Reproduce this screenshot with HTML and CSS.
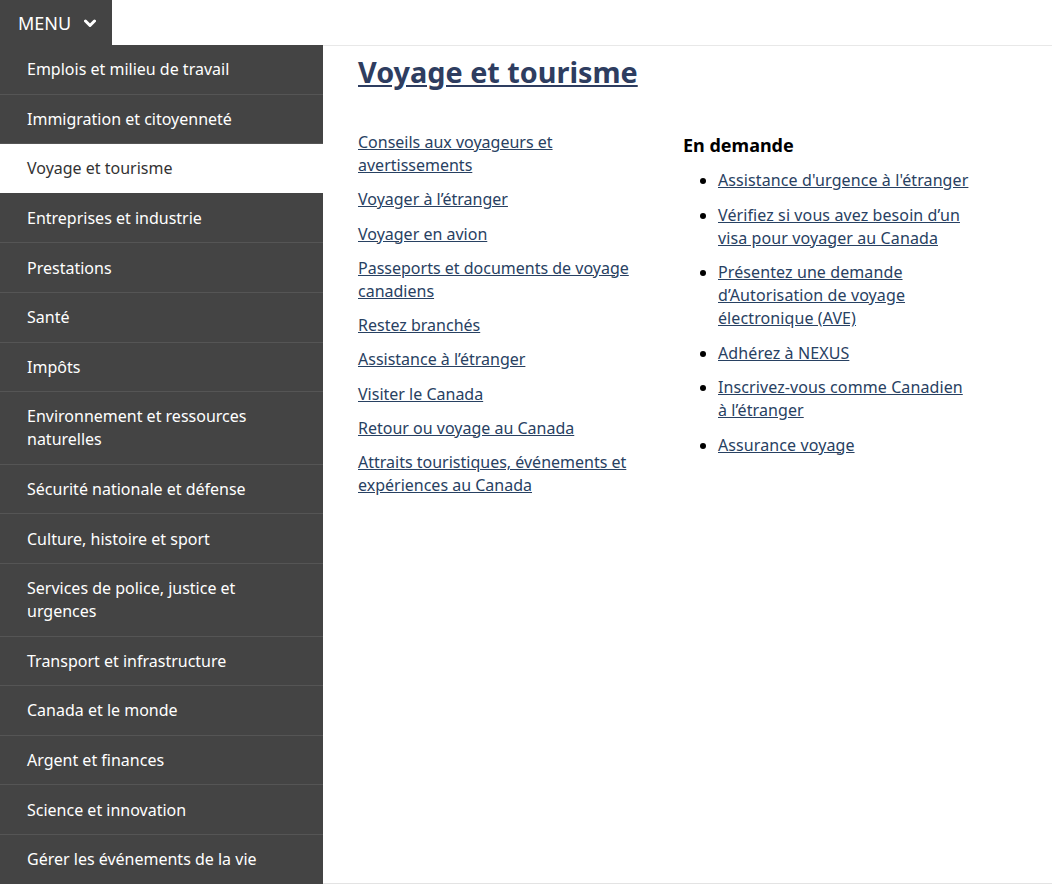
FILE: index.html
```html
<!DOCTYPE html>
<html lang="fr">
<head>
<meta charset="utf-8">
<title>Voyage et tourisme</title>
<link rel="stylesheet" href="styles.css">
</head>
<body>
<header class="topbar">
  <button class="menu-btn" type="button">MENU
    <svg class="chev" width="12" height="9" viewBox="0 0 12 9" aria-hidden="true"><polyline points="1.5,2 6,6.5 10.5,2" fill="none" stroke="#fff" stroke-width="3" stroke-linecap="round" stroke-linejoin="round"/></svg>
  </button>
</header>
<div class="mega">
  <nav class="menu">
    <ul class="menu-list">
      <li><a href="#">Emplois et milieu de travail</a></li>
      <li><a href="#">Immigration et citoyenneté</a></li>
      <li class="active"><a href="#">Voyage et tourisme</a></li>
      <li><a href="#">Entreprises et industrie</a></li>
      <li><a href="#">Prestations</a></li>
      <li><a href="#">Santé</a></li>
      <li><a href="#">Impôts</a></li>
      <li><a href="#">Environnement et ressources naturelles</a></li>
      <li><a href="#">Sécurité nationale et défense</a></li>
      <li><a href="#">Culture, histoire et sport</a></li>
      <li><a href="#">Services de police, justice et urgences</a></li>
      <li><a href="#">Transport et infrastructure</a></li>
      <li><a href="#">Canada et le monde</a></li>
      <li><a href="#">Argent et finances</a></li>
      <li><a href="#">Science et innovation</a></li>
      <li><a href="#">Gérer les événements de la vie</a></li>
    </ul>
  </nav>
  <section class="panel">
    <h1 class="panel-title"><a href="#">Voyage et tourisme</a></h1>
    <div class="cols">
      <ul class="sub-links">
        <li><a href="#">Conseils aux voyageurs et avertissements</a></li>
        <li><a href="#">Voyager à l’étranger</a></li>
        <li><a href="#">Voyager en avion</a></li>
        <li><a href="#">Passeports et documents de voyage canadiens</a></li>
        <li><a href="#">Restez branchés</a></li>
        <li><a href="#">Assistance à l’étranger</a></li>
        <li><a href="#">Visiter le Canada</a></li>
        <li><a href="#">Retour ou voyage au Canada</a></li>
        <li><a href="#">Attraits touristiques, événements et expériences au Canada</a></li>
      </ul>
      <div class="demand">
        <h2 class="demand-title">En demande</h2>
        <ul class="demand-list">
          <li><a href="#">Assistance d'urgence à l'étranger</a></li>
          <li><a href="#">Vérifiez si vous avez besoin d’un visa pour voyager au Canada</a></li>
          <li><a href="#">Présentez une demande d’Autorisation de voyage électronique (AVE)</a></li>
          <li><a href="#">Adhérez à NEXUS</a></li>
          <li><a href="#">Inscrivez-vous comme Canadien à l’étranger</a></li>
          <li><a href="#">Assurance voyage</a></li>
        </ul>
      </div>
    </div>
  </section>
</div>
</body>
</html>
```

FILE: styles.css
```css
* { box-sizing: border-box; }
html, body { margin: 0; padding: 0; }
body {
  font-family: "Noto Sans", "DejaVu Sans", sans-serif;
  font-size: 16px;
  line-height: 23px;
  color: #333;
  background: #fff;
  width: 1052px;
  height: 884px;
  overflow: hidden;
}
ul { list-style: none; margin: 0; padding: 0; }

.topbar { height: 45px; display: flex; }
.menu-btn {
  height: 45px;
  width: 112px;
  background: #444;
  color: #fff;
  border: 0;
  margin: 0;
  padding: 0 0 0 18px;
  font-family: inherit;
  font-size: 18px;
  display: flex;
  align-items: center;
  gap: 13px;
  cursor: pointer;
}
.chev { display: block; margin-top: 1px; }

.mega { display: flex; height: 839px; }
.menu { width: 323px; flex: none; background: #444; }
.menu-list li { border-bottom: 1px solid #555; }
.menu-list li:last-child { border-bottom: 0; }
.menu-list a {
  display: block;
  padding: 13.3px 20px 12.3px 27px;
  color: #fff;
  text-decoration: none;
}
.menu-list li.active { background: #fff; border-bottom-color: #444; }
.menu-list li.active a { color: #333; }

.panel {
  flex: 1;
  border-top: 1px solid #e8e8e8;
  border-bottom: 1px solid #e3e3e3;
  padding: 6px 35px 0 35px;
}
.panel-title {
  margin: 0 0 39px;
  font-size: 28.8px;
  line-height: 40px;
  font-weight: 700;
}
.panel-title a { color: #2e3d60; }

.cols {
  display: grid;
  grid-template-columns: 295px 295px;
  column-gap: 30px;
}
a { color: #284162; }
.sub-links li { margin-bottom: 11px; line-height: 23.2px; }

.demand-title {
  margin: 0 0 11px;
  font-size: 18px;
  line-height: 26px;
  font-weight: 700;
  color: #000;
  padding-top: 1px;
}
.demand-list {
  list-style: disc;
  padding-left: 35px;
  width: 286px;
  color: #000;
  letter-spacing: 0.1px;
}
.demand-list li { margin-bottom: 11.5px; }
```
